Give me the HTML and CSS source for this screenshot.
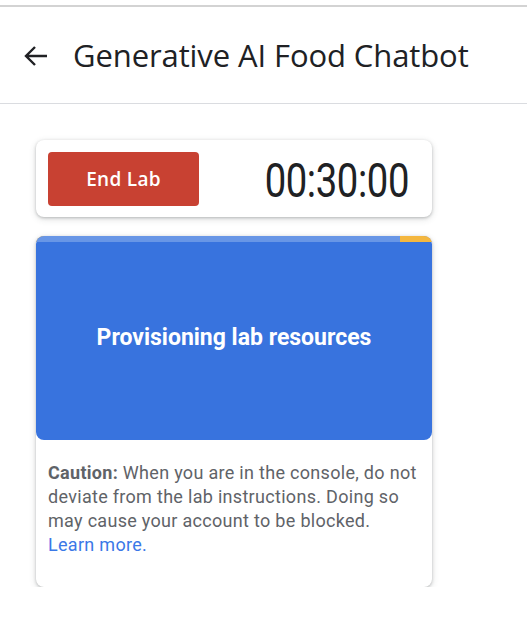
FILE: index.html
```html
<!DOCTYPE html>
<html>
<head>
<meta charset="utf-8">
<link rel="stylesheet" href="styles.css">
</head>
<body>
<div class="topline"></div>
<header class="header">
  <svg class="back" width="26" height="26" viewBox="0 0 26 26"><path d="M24 13H3M12 4L3 13l9 9" fill="none" stroke="#202124" stroke-width="2.4"/></svg>
  <h1 class="title">Generative AI Food Chatbot</h1>
</header>
<main class="panel">
  <section class="card timer-card">
    <button class="end-btn">End Lab</button>
    <div class="timer">00:30:00</div>
  </section>
  <section class="card status-card">
    <div class="status">
      <div class="progress"><div class="progress-fill" style="width:92%"></div></div>
      <div class="status-text">Provisioning lab resources</div>
    </div>
    <p class="caution"><b class="caution-label">Caution:</b> When you are in the console, do not deviate from the lab instructions. Doing so may cause your account to be blocked. <a href="#">Learn more.</a></p>
  </section>
</main>
</body>
</html>
```
FILE: styles.css
```css
html, body { margin: 0; padding: 0; background: #fff; }
body { font-family: Roboto, "Noto Sans", sans-serif; }
.topline { height: 5px; border-bottom: 2px solid #d3d3d3; }
.header {
  height: 97px; box-sizing: border-box;
  border-bottom: 1px solid #dadce0;
  display: flex; align-items: center;
  padding: 0 0 0 23px;
}
.back { margin-right: 24px; margin-top: 1px; }
.title {
  margin: 0; font-family: "Open Sans", Roboto, sans-serif; font-weight: 400;
  font-size: 31px; color: #202124; letter-spacing: -0.1px;
}
.panel { padding: 36px 0 0 36px; width: 396px; display: flex; flex-direction: column; gap: 19px; }
.card {
  background: #fff; border-radius: 8px;
  box-shadow: 0 1px 3px rgba(60,64,67,.3), 0 2px 6px 1px rgba(60,64,67,.12);
}
.timer-card {
  display: flex; align-items: center; justify-content: space-between;
  padding: 12px 23px 11px 12px; height: 77px; box-sizing: border-box;
}
.end-btn {
  width: 151px; height: 54px; border: 0; border-radius: 4px;
  background: #c84132; color: #fff; font-family: "Open Sans", Roboto, sans-serif;
  font-weight: 600; font-size: 19px; letter-spacing: 0.3px; padding: 0;
}
.timer {
  font-family: Roboto, sans-serif; font-size: 49px; color: #202124; line-height: 1;
  margin-top: 2px; transform: scaleX(0.78); transform-origin: right center;
  letter-spacing: -0.5px;
}
.status-card { overflow: hidden; }
.status { background: #3873de; height: 204px; display: flex; flex-direction: column; border-radius: 8px; }
.progress { height: 6px; background: #f4b73f; }
.progress-fill { height: 100%; background: #6896e6; }
.status-text {
  flex: 1; display: flex; align-items: center; justify-content: center;
  color: #fff; font-weight: 700; font-size: 23px; padding-bottom: 8px;
}
.caution {
  margin: 0; padding: 21px 12px 30px 12px;
  font-size: 18px; line-height: 24px; color: #5f6368; letter-spacing: 0.3px;
}
.caution-label { font-weight: 700; }
.caution a { color: #3b78e7; text-decoration: none; }
```
